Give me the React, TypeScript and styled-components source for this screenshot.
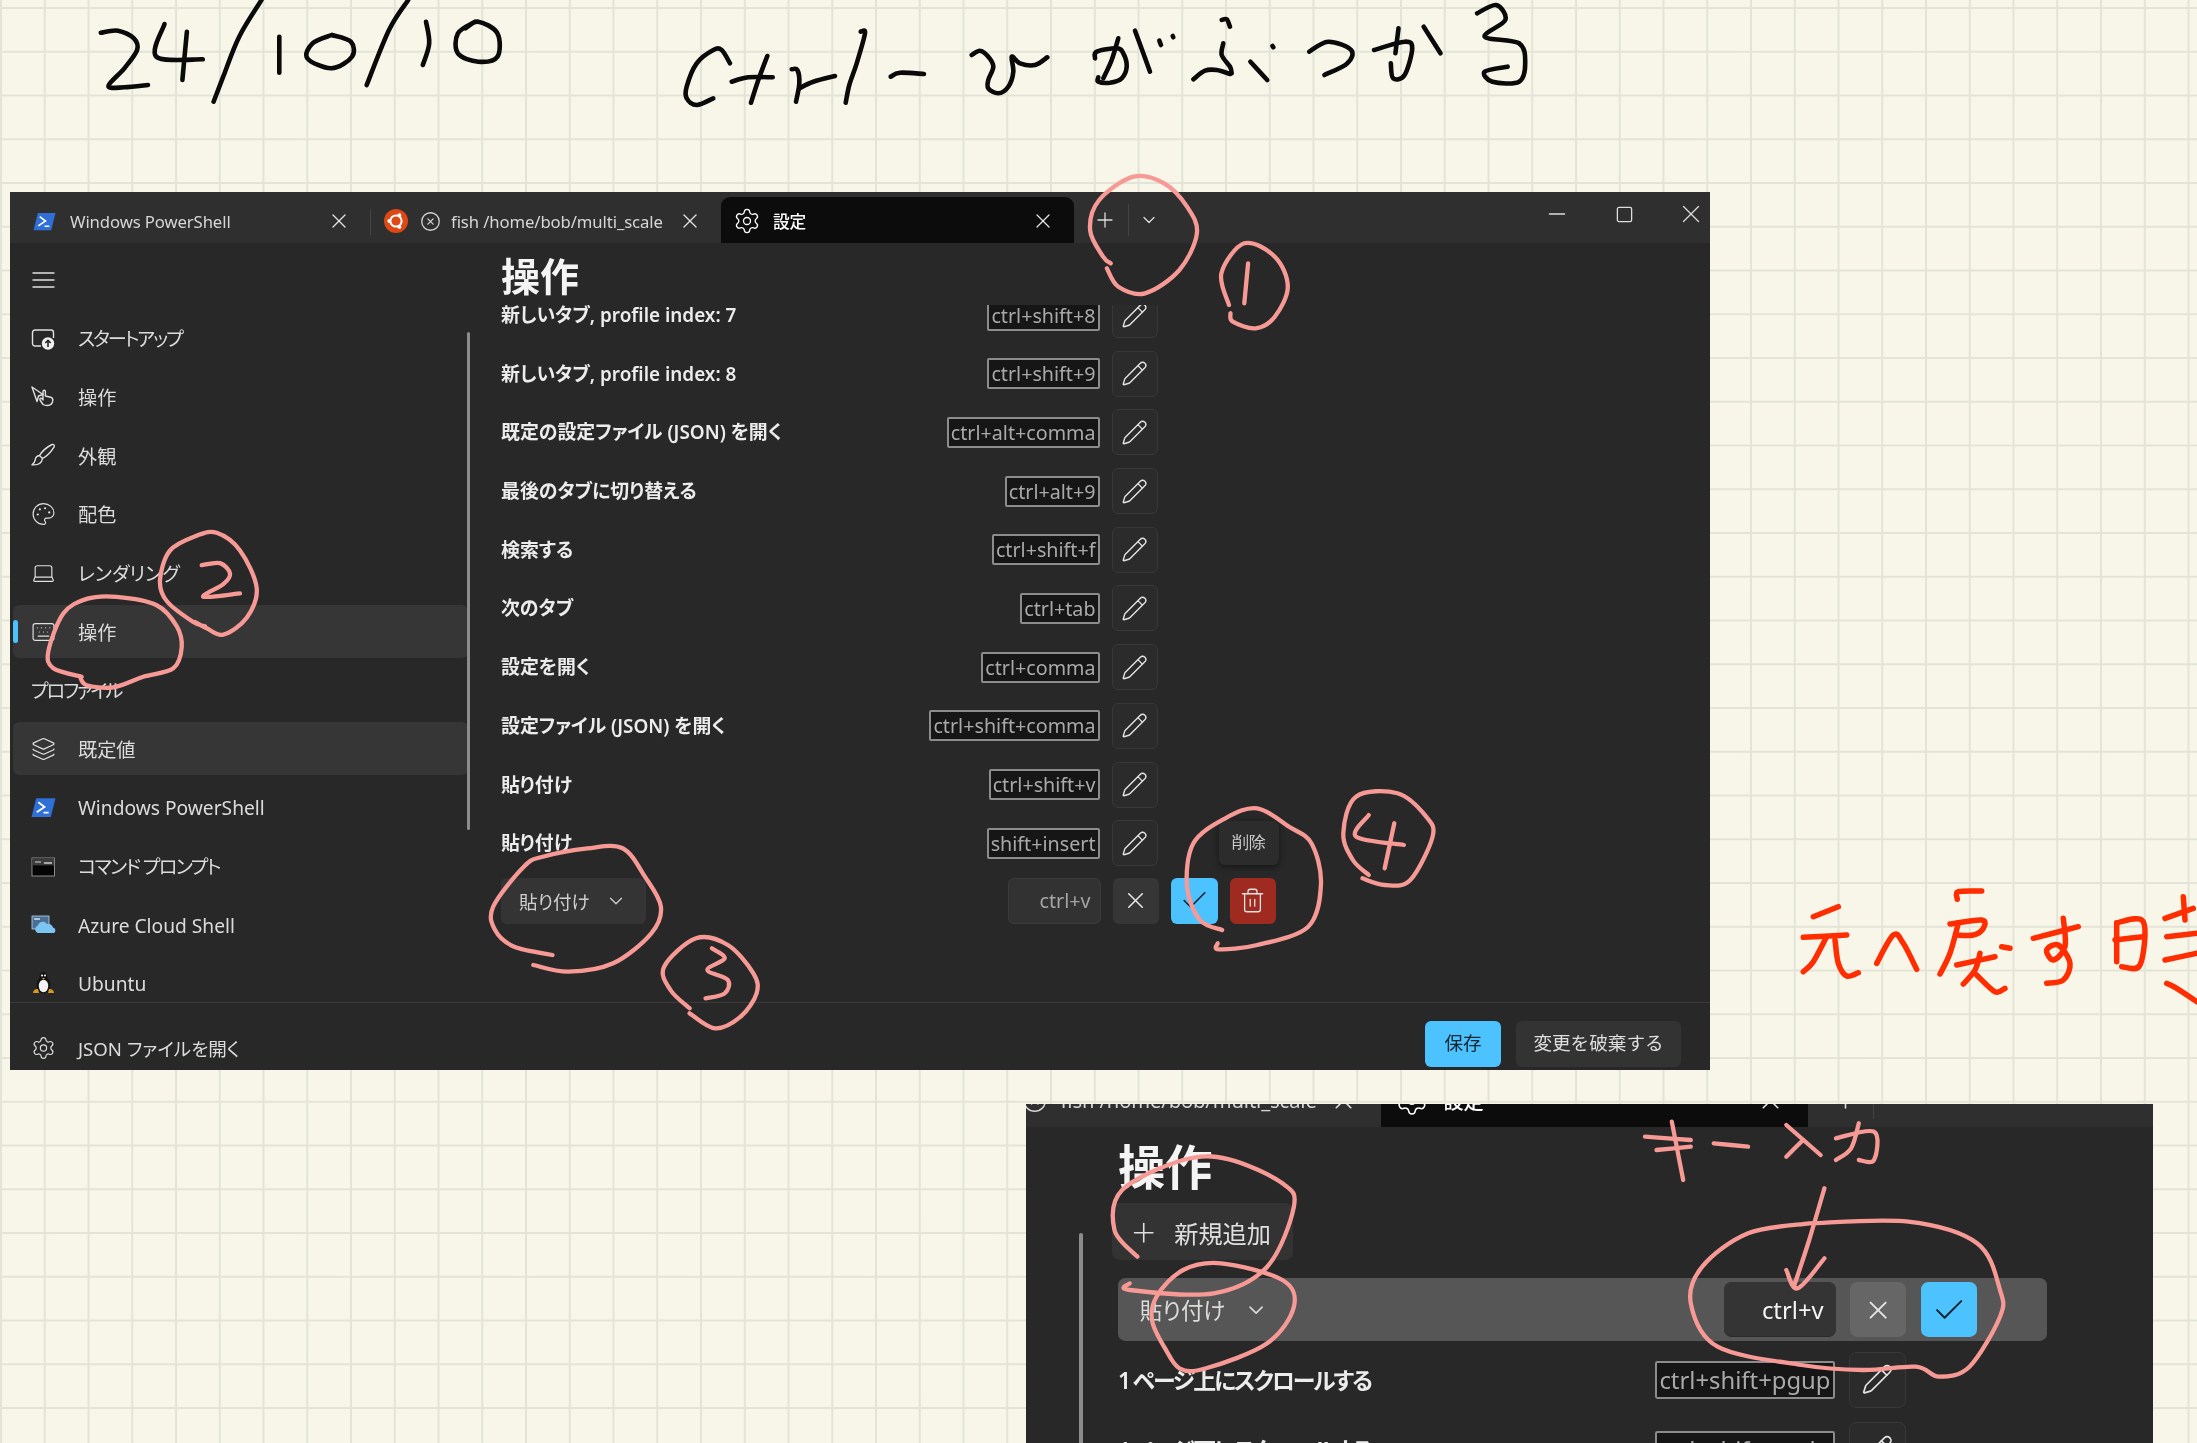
import React from "react";
import styled, { createGlobalStyle } from "styled-components";
import { Check, ChevronDown, CircleX, Keyboard, Laptop, Layers, Minus, Palette, Pencil, Plus, Settings, Square, Trash2, X } from "lucide-react";

const Global = createGlobalStyle`
  html, body { margin: 0; padding: 0; background: #f7f6e9; }
  #root { width: 2197px; height: 1443px; overflow: hidden; }
`;

const FONT = `"Noto Sans", "Noto Sans CJK JP", sans-serif`;

const Paper = styled.div`
  position: relative;
  width: 2197px;
  height: 1443px;
  overflow: hidden;
  background-color: #f7f6e9;
  background-image:
    linear-gradient(to right, #e4e5d8 0, #e2e3d6 2px, transparent 2px),
    linear-gradient(to bottom, #e4e5d8 0, #e2e3d6 2px, transparent 2px);
  background-size: 43.75px 43.75px;
  background-position: 0px 7px;
  font-family: ${FONT};
  font-feature-settings: "palt";
  color: #e6e6e6;
`;

const Win = styled.section<{ $x: number; $y: number; $w: number; $h: number }>`
  position: absolute;
  left: ${(p) => p.$x}px;
  top: ${(p) => p.$y}px;
  width: ${(p) => p.$w}px;
  height: ${(p) => p.$h}px;
  background: #282828;
  overflow: hidden;
  display: flex;
  flex-direction: column;
  filter: blur(0.45px);
`;

const Zoomed = styled.div`
  zoom: 1.21;
  width: 931.4px;
  height: 280.2px;
  display: flex;
  flex-direction: column;
  position: relative;
`;

const TabBar = styled.header`
  height: 51px;
  flex: none;
  display: flex;
  background: #2f2f2f;
`;

const TabClip = styled.div`
  height: 19px;
  flex: none;
  overflow: hidden;
  background: #2f2f2f;
`;

const ShiftedBar = styled(TabBar)`
  margin-top: -32px;
  margin-left: -57px;
`;

const Tab = styled.div<{ $w: number; $active?: boolean; $pad: number }>`
  width: ${(p) => p.$w}px;
  box-sizing: border-box;
  margin-top: 5px;
  padding: 2px 19px 0 ${(p) => p.$pad}px;
  display: flex;
  align-items: center;
  flex: none;
  font-size: 16.7px;
  border-radius: 9px 9px 0 0;
  color: ${(p) => (p.$active ? "#ffffff" : "#d6d6d6")};
  background: ${(p) => (p.$active ? "#0c0c0c" : "transparent")};
  letter-spacing: -0.1px;
  white-space: nowrap;
`;

const TabIcon = styled.span<{ $gap: number }>`
  display: inline-flex;
  margin-right: ${(p) => p.$gap}px;
  flex: none;
`;

const TabClose = styled.span`
  margin-left: auto;
  display: inline-flex;
  color: #e4e4e4;
`;

const TabTitle = styled.span`
  font-weight: 500;
`;

const TabDivider = styled.div`
  width: 1px;
  height: 26px;
  margin-top: 17px;
  background: #444;
  flex: none;
`;

const AddButtons = styled.div`
  display: flex;
  align-items: center;
  flex: none;
  margin-top: 5px;
  margin-left: 19px;
  color: #ddd;
`;

const AddDivider = styled.div`
  width: 1px;
  height: 32px;
  background: #444;
  margin: 0 10px 0 11px;
`;

const WinControls = styled.div`
  margin-left: auto;
  margin-right: -14.5px;
  display: flex;
  align-items: flex-start;
  color: #ddd;
`;

const WinControl = styled.span`
  width: 67px;
  height: 44px;
  display: flex;
  align-items: center;
  justify-content: center;
`;

const Body = styled.div`
  flex: 1;
  min-height: 0;
  display: flex;
  overflow: hidden;
`;

const Sidebar = styled.nav`
  width: 458px;
  flex: none;
  box-sizing: border-box;
  padding: 9.5px 0 0 3px;
  display: flex;
  flex-direction: column;
  gap: 5.7px;
  position: relative;
`;

const NavRow = styled.div<{ $fill?: boolean }>`
  height: 53px;
  flex: none;
  box-sizing: border-box;
  padding: 1px 0 0 18px;
  display: flex;
  align-items: center;
  gap: 22px;
  border-radius: 6px;
  position: relative;
  font-size: 19.2px;
  color: #dcdcdc;
  background: ${(p) => (p.$fill ? "#363636" : "transparent")};
`;

const Kana = styled.span<{ $tight?: number }>`
  letter-spacing: ${(p) => p.$tight ?? -2.1}px;
`;

const NavMark = styled.span`
  position: absolute;
  left: 0;
  top: 15px;
  width: 5px;
  height: 23px;
  border-radius: 3px;
  background: #4cc2ff;
`;

const NavIcon = styled.span`
  width: 25px;
  height: 25px;
  display: inline-flex;
  align-items: center;
  justify-content: center;
  flex: none;
  color: #e0e0e0;
`;

const ScrollThumb = styled.div<{ $left: number; $top: number; $h: number }>`
  position: absolute;
  left: ${(p) => p.$left}px;
  top: ${(p) => p.$top}px;
  width: 3px;
  height: ${(p) => p.$h}px;
  background: #8c8c8c;
  border-radius: 2px;
`;

const Main = styled.main`
  flex: 1;
  min-width: 0;
  display: flex;
  flex-direction: column;
  padding-left: 33px;
`;

const Heading = styled.h1`
  margin: 0;
  height: 62px;
  flex: none;
  display: flex;
  align-items: center;
  font-size: 39px;
  font-weight: 700;
  color: #f4f4f4;
`;

const List = styled.div`
  flex: 1;
  min-height: 0;
  overflow: hidden;
  display: flex;
  flex-direction: column;
`;

const ListInner = styled.div`
  margin-top: -13px;
  display: flex;
  flex-direction: column;
  gap: 12.7px;
`;

const Row = styled.div<{ $w?: number; $tuck?: boolean }>`
  width: ${(p) => p.$w ?? 657}px;
  height: 46px;
  flex: none;
  display: flex;
  align-items: center;
  gap: 12px;
  margin-top: ${(p) => (p.$tuck ? "-1px" : "0")};
`;

const Label = styled.div`
  flex: 1;
  padding-bottom: 2px;
  font-size: 18.9px;
  font-weight: 600;
  color: #ececec;
  white-space: nowrap;
`;

const KeyBox = styled.kbd`
  height: 31px;
  box-sizing: border-box;
  border: 2px solid #8c8c8c;
  border-radius: 2px;
  background: #161616;
  padding: 0 2px;
  display: flex;
  align-items: center;
  font-family: ${FONT};
  font-size: 19.7px;
  color: #a9a9a9;
  white-space: nowrap;
`;

const IconButton = styled.button<{ $kind?: "edit" | "plain" | "accept" | "danger" | "muted" }>`
  width: 46.5px;
  height: 46px;
  padding: 0;
  flex: none;
  position: relative;
  display: inline-flex;
  align-items: center;
  justify-content: center;
  border-radius: 6px;
  box-sizing: border-box;
  border: ${(p) => (p.$kind === "edit" ? "1.5px solid #383838" : "none")};
  background: ${(p) =>
    p.$kind === "accept" ? "#4cc2ff" : p.$kind === "danger" ? "#9f2a20" : p.$kind === "muted" ? "#666666" : p.$kind === "edit" ? "#2b2b2b" : "#363636"};
  color: ${(p) => (p.$kind === "accept" ? "#10222c" : "#e4e4e4")};
`;

const Dropdown = styled.div<{ $bare?: boolean }>`
  height: 46px;
  display: flex;
  align-items: center;
  gap: 15px;
  padding: 0 19px 0 18px;
  border-radius: 6px;
  background: ${(p) => (p.$bare ? "transparent" : "#343434")};
  color: ${(p) => (p.$bare ? "#dcdcdc" : "#cfcfcf")};
  font-size: 18.6px;
  flex: none;
`;

const Spacer = styled.div`
  flex: 1;
`;

const KeyInput = styled.div<{ $dark?: boolean; $w: number }>`
  width: ${(p) => p.$w}px;
  height: 46px;
  box-sizing: border-box;
  border: 1.5px solid ${(p) => (p.$dark ? "#343434" : "#3b3b3b")};
  border-bottom-color: ${(p) => (p.$dark ? "#2a2a2a" : "#3b3b3b")};
  border-radius: 6px;
  background: ${(p) => (p.$dark ? "#343434" : "#323232")};
  color: ${(p) => (p.$dark ? "#f4f4f4" : "#a4a4a4")};
  display: flex;
  align-items: center;
  justify-content: flex-end;
  padding-right: 9px;
  font-size: 19.7px;
  flex: none;
`;

const Tooltip = styled.div`
  position: absolute;
  left: -11px;
  bottom: 59px;
  width: 60px;
  height: 44px;
  display: flex;
  align-items: center;
  justify-content: center;
  border-radius: 6px;
  background: #2c2c2c;
  box-shadow: 0 2px 6px rgba(0, 0, 0, 0.45);
  font-size: 16.7px;
  color: #cfcfcf;
`;

const Footer = styled.footer`
  height: 68px;
  flex: none;
  box-sizing: border-box;
  border-top: 1.5px solid #3a3a3a;
  display: flex;
  align-items: center;
  padding: 0 29px 0 21px;
  font-size: 18.6px;
  color: #dcdcdc;
`;

const FooterLink = styled.div`
  display: flex;
  align-items: center;
  gap: 22px;
  margin-top: 22px;
`;

const FooterActions = styled.div`
  margin-left: auto;
  display: flex;
  gap: 15px;
  margin-top: 14px;
`;

const TextButton = styled.button<{ $accent?: boolean; $w: number }>`
  width: ${(p) => p.$w}px;
  height: 46px;
  padding: 0 0 4px;
  border: none;
  border-radius: 6px;
  font-family: ${FONT};
  font-size: 18.6px;
  background: ${(p) => (p.$accent ? "#4cc2ff" : "#333333")};
  color: ${(p) => (p.$accent ? "#0f2530" : "#dedede")};
`;

const SecondBody = styled.div`
  flex: 1;
  min-height: 0;
  padding-left: 76px;
  display: flex;
  flex-direction: column;
`;

const NewButton = styled.div`
  width: 150px;
  height: 47px;
  flex: none;
  margin: 1px 0 0 -5px;
  border-radius: 6px;
  background: #333333;
  display: flex;
  align-items: center;
  gap: 12px;
  padding: 1px 0 0 13.5px;
  box-sizing: border-box;
  font-size: 20px;
  color: #e0e0e0;
`;

const HighlightRow = styled.div`
  width: 768px;
  height: 52px;
  flex: none;
  margin-top: 15px;
  box-sizing: border-box;
  padding-right: 58px;
  background: #565656;
  border-radius: 6px;
  display: flex;
  align-items: center;
  gap: 12px;
`;

const SecondRows = styled.div`
  margin-top: 9px;
  display: flex;
  flex-direction: column;
  gap: 12px;
`;

const InkLayer = styled.svg`
  position: absolute;
  left: 0;
  top: 0;
  width: 2197px;
  height: 1443px;
  pointer-events: none;
  fill: none;
  stroke-linecap: round;
  stroke-linejoin: round;
`;

const ic = { strokeWidth: 1.3, absoluteStrokeWidth: true } as const;
const bold = { strokeWidth: 1.6, absoluteStrokeWidth: true } as const;

const PsIcon = ({ size = 23 }: { size?: number }) => (
  <svg width={size} height={size} viewBox="0 0 24 24">
    <path d="M5 3h18.500l-4.500 18H.5z" fill="#2f6fd6" />
    <path d="M7 7l6 4.500-7.500 5M12 17h5" fill="none" stroke="#fff" strokeWidth="1.7" />
  </svg>
);

const UbuntuIcon = () => (
  <svg width="24" height="24" viewBox="0 0 24 24">
    <circle cx="12" cy="12" r="12" fill="#dd4814" />
    <circle cx="12" cy="12" r="5.600" fill="none" stroke="#fff" strokeWidth="2" />
    <circle cx="5.200" cy="12" r="1.900" fill="#fff" />
    <circle cx="15.400" cy="6.100" r="1.900" fill="#fff" />
    <circle cx="15.400" cy="17.900" r="1.900" fill="#fff" />
  </svg>
);

const MenuIcon = () => (
  <svg width="23" height="16" viewBox="0 0 23 16" fill="none" stroke="currentColor" strokeWidth="1.4">
    <path d="M.5 1h22M.5 8h22M.5 15h22" />
  </svg>
);

const StartupIcon = () => (
  <svg width="25" height="25" viewBox="0 0 25 25" fill="none">
    <path d="M10 20H4a2.500 2.500 0 0 1-2.500-2.500v-11A2.500 2.500 0 0 1 4 4h16a2.500 2.500 0 0 1 2.500 2.500V12" stroke="currentColor" strokeWidth="1.400" />
    <circle cx="17" cy="17.500" r="6.200" fill="#f0f0f0" />
    <path d="M17 21v-6.500M14.300 17l2.700-2.700 2.700 2.700" stroke="#282828" strokeWidth="1.600" />
  </svg>
);

const ActionsIcon = () => (
  <svg width="25" height="25" viewBox="0 0 25 25" fill="none" stroke="currentColor" strokeWidth="1.400" strokeLinejoin="round" strokeLinecap="round">
    <path d="M1 3l11 7.500-4.500 1.500L6 17.500z" />
    <path d="M12 20.500l-3-4.500c-.8-1.300 1-2.600 2-1.300l1 1.200V7.500c0-1.600 2.400-1.600 2.400 0V12l5.200 1.200c1.600.4 2.400 1.600 2.200 3.200-.3 3-2.200 5-5.300 5.100-1.700 0-3.400-.2-4.500-1z" />
  </svg>
);

const BrushIcon = () => (
  <svg width="25" height="25" viewBox="0 0 25 25" fill="none" stroke="currentColor" strokeWidth="1.400" strokeLinejoin="round" strokeLinecap="round">
    <path d="M21 1.500c1.800-.6 2.800 1 2.100 2.300C20 9 15.500 13.300 11.500 15.500l-3-3C11 8.500 16 4 21 1.500z" />
    <path d="M8.500 12.500c-2.500.3-4 2-4.300 4.300-.2 1.700-1.200 3.500-3.200 5 4 .4 9.500-.4 10.500-6.300" />
  </svg>
);

const CmdIcon = () => (
  <svg width="25" height="25" viewBox="0 0 25 25">
    <rect x="1" y="4" width="22.500" height="18" fill="#050505" stroke="#a8a8a8" strokeWidth="0.800" />
    <rect x="1.400" y="4.400" width="21.700" height="7" fill="#3c3c3c" />
    <path d="M4 8h6" stroke="#9c9c9c" strokeWidth="1.600" />
    <path d="M13 9h8" stroke="#f0f0f0" strokeWidth="1.200" />
  </svg>
);

const AzureIcon = () => (
  <svg width="25" height="25" viewBox="0 0 25 25">
    <rect x="1" y="3" width="17" height="13" fill="#4a6f95" stroke="#b9d4ea" strokeWidth="0.800" />
    <path d="M3 6h6" stroke="#fff" strokeWidth="1.200" />
    <path d="M7 20a4 4 0 0 1 0-7.600a5 5 0 0 1 9-1.400a5 5 0 0 1 6 3.500a3 3 0 0 1 1 5.500z" fill="#7cc4f2" />
  </svg>
);

const TuxIcon = () => (
  <svg width="25" height="25" viewBox="0 0 25 25">
    <ellipse cx="12.500" cy="14" rx="7" ry="8.500" fill="#141414" />
    <ellipse cx="12.500" cy="6" rx="4" ry="5" fill="#141414" />
    <ellipse cx="12.500" cy="15" rx="4.700" ry="6.200" fill="#f2f2f2" />
    <circle cx="11" cy="4.500" r="1" fill="#fff" />
    <circle cx="14" cy="4.500" r="1" fill="#fff" />
    <path d="M11 7h3l-1.500 1.600z" fill="#e5a823" />
    <path d="M2 22c0-3 3-4.500 5-4l1 4zM23 22c0-3-3-4.500-5-4l-1 4z" fill="#d79a1c" />
  </svg>
);

type Pt = number[];
type Xf = { ox: number; oy: number; sx: number; sy: number };

const smooth = (flat: Pt, t: Xf) => {
  const p: [number, number][] = [];
  for (let i = 0; i < flat.length; i += 2) p.push([t.ox + flat[i] / t.sx, t.oy + flat[i + 1] / t.sy]);
  let d = `M${p[0][0].toFixed(1)} ${p[0][1].toFixed(1)}`;
  for (let i = 0; i < p.length - 1; i++) {
    const a = p[Math.max(i - 1, 0)], b = p[i], c = p[i + 1], e = p[Math.min(i + 2, p.length - 1)];
    const c1x = b[0] + (c[0] - a[0]) / 6, c1y = b[1] + (c[1] - a[1]) / 6;
    const c2x = c[0] - (e[0] - b[0]) / 6, c2y = c[1] - (e[1] - b[1]) / 6;
    d += `C${c1x.toFixed(1)} ${c1y.toFixed(1)} ${c2x.toFixed(1)} ${c2y.toFixed(1)} ${c[0].toFixed(1)} ${c[1].toFixed(1)}`;
  }
  return d;
};

const Z1: Xf = { ox: 0, oy: 0, sx: 1.568, sy: 3 };
const Z2: Xf = { ox: 0, oy: 420, sx: 3, sy: 2.376 };
const Z3: Xf = { ox: 460, oy: 700, sx: 1.568, sy: 3 };
const Z4: Xf = { ox: 1000, oy: 1090, sx: 1.31, sy: 3 };
const Z5: Xf = { ox: 1000, oy: 0, sx: 1.31, sy: 3 };
const Z6: Xf = { ox: 1700, oy: 820, sx: 3, sy: 3 };
const Z7: Xf = { ox: 960, oy: 0, sx: 3, sy: 3 };
const Z8: Xf = { ox: 680, oy: 20, sx: 3, sy: 3 };

const black: [Pt, Xf][] = [
  [[158, 98, 185, 92, 210, 115, 215, 150, 195, 205, 170, 258, 195, 262, 232, 255], Z1],
  [[258, 72, 245, 170, 318, 178], Z1],
  [[293, 95, 286, 240], Z1],
  [[410, 0, 375, 110, 350, 230, 335, 305], Z1],
  [[438, 110, 438, 218], Z1],
  [[520, 105, 490, 130, 482, 175, 520, 205, 552, 170, 550, 125, 520, 105], Z1],
  [[640, 0, 610, 90, 575, 255], Z1],
  [[668, 65, 673, 130, 663, 195], Z1],
  [[745, 65, 718, 100, 718, 160, 750, 185, 780, 170, 780, 100, 750, 65, 730, 85], Z1],
  [[150, 130, 125, 90, 100, 90, 50, 130, 20, 200, 20, 235, 50, 255, 100, 235], Z8],
  [[155, 185, 205, 172, 278, 172], Z8],
  [[262, 108, 235, 180, 213, 248], Z8],
  [[335, 148, 352, 150, 358, 190, 348, 245], Z8],
  [[358, 205, 400, 185, 465, 168], Z8],
  [[542, 35, 555, 40, 530, 130, 508, 195, 497, 248], Z8],
  [[632, 170, 660, 158, 732, 162], Z8],
  [[35, 165, 60, 152, 85, 170, 100, 200, 85, 240, 85, 265, 115, 280, 145, 260, 160, 215, 155, 170, 180, 190, 225, 195, 262, 172], Z7],
  [[405, 175, 410, 155, 470, 145, 490, 160, 500, 200, 485, 235, 450, 248, 415, 245, 415, 232], Z7],
  [[475, 115, 455, 180, 430, 235], Z7],
  [[525, 92, 550, 160, 570, 215], Z7],
  [[598, 122, 603, 135], Z7],
  [[638, 108, 640, 112], Z7],
  [[785, 60, 800, 58, 810, 80], Z7],
  [[790, 130, 785, 165, 810, 200, 815, 220], Z7],
  [[700, 238, 735, 212, 770, 210, 810, 222], Z7],
  [[328, 185, 350, 240], Z5],
  [[357, 138, 358, 142], Z5],
  [[405, 155, 430, 125, 460, 150, 455, 190, 425, 225], Z5],
  [[490, 150, 530, 125, 540, 145, 530, 225, 515, 235, 512, 190], Z5],
  [[522, 85, 518, 160], Z5],
  [[555, 80, 577, 160], Z5],
  [[625, 40, 650, 15, 662, 60, 635, 110, 680, 130, 688, 190, 680, 245, 645, 245, 635, 215, 665, 200], Z5],
];
const pink: [Pt, Xf][] = [
  [[145, 790, 135, 770, 118, 690, 130, 600, 175, 530, 215, 550, 245, 620, 258, 700, 235, 810, 190, 880, 155, 860, 140, 805], Z5],
  [[300, 915, 290, 820, 320, 730, 360, 770, 377, 860, 360, 950, 335, 985, 305, 965, 302, 940], Z5],
  [[325, 790, 320, 910], Z5],
  [[615, 490, 580, 480, 500, 430, 480, 380, 510, 310, 590, 275, 650, 268, 720, 310, 770, 400, 740, 470, 670, 510, 620, 495, 585, 480], Z2],
  [[605, 345, 660, 340, 690, 365, 670, 390, 610, 420, 720, 412], Z2],
  [[245, 610, 160, 590, 145, 550, 190, 460, 260, 425, 350, 420, 470, 440, 530, 490, 545, 540, 520, 590, 430, 610, 340, 635, 260, 630, 240, 610], Z2],
  [[145, 765, 85, 740, 55, 690, 52, 620, 100, 500, 130, 470, 200, 445, 255, 445, 290, 530, 315, 620, 300, 700, 240, 790, 170, 815, 115, 795], Z3],
  [[360, 925, 330, 870, 320, 800, 370, 715, 420, 735, 460, 820, 465, 880, 440, 950, 400, 985, 360, 940], Z3],
  [[395, 745, 415, 775, 388, 810, 420, 840, 415, 880, 385, 895], Z3],
  [[1195, 690, 1160, 660, 1140, 560, 1150, 430, 1200, 355, 1250, 325, 1300, 380, 1335, 430, 1350, 550, 1330, 680, 1250, 735, 1190, 748, 1188, 730], Z3],
  [[1425, 525, 1400, 480, 1385, 400, 1405, 290, 1470, 280, 1515, 350, 1525, 410, 1490, 540, 1450, 555, 1415, 535], Z3],
  [[1425, 345, 1405, 410, 1480, 435], Z3],
  [[1465, 370, 1450, 505], Z3],
  [[180, 500, 150, 420, 160, 300, 240, 210, 300, 208, 370, 280, 385, 350, 350, 530, 280, 610, 170, 600, 170, 580], Z4],
  [[225, 810, 200, 700, 205, 620, 240, 540, 290, 520, 370, 570, 385, 650, 350, 760, 270, 835, 235, 835, 215, 770], Z4],
  [[1060, 400, 980, 430, 920, 530, 905, 640, 940, 770, 1050, 825, 1130, 840, 1200, 830, 1230, 860, 1270, 830, 1310, 680, 1310, 600, 1280, 460, 1190, 395, 1060, 400], Z4],
  [[1080, 295, 1060, 450, 1040, 590], Z4],
  [[1030, 540, 1045, 595, 1080, 505], Z4],
  [[845, 140, 905, 150], Z4],
  [[860, 180, 905, 170], Z4],
  [[880, 95, 895, 270], Z4],
  [[935, 160, 980, 170], Z4],
  [[1030, 105, 1075, 195], Z4],
  [[1052, 150, 1030, 200], Z4],
  [[1095, 145, 1145, 125, 1145, 210, 1125, 210], Z4],
  [[1125, 100, 1115, 175, 1095, 210], Z4],
];
const red: Pt[] = [
  [340, 290, 415, 260],
  [310, 352, 440, 345],
  [380, 350, 340, 425, 310, 455],
  [405, 360, 415, 430, 440, 468, 475, 458],
  [530, 430, 580, 345, 610, 370, 650, 448],
  [772, 238, 775, 215, 845, 213],
  [750, 312, 845, 300, 850, 325, 820, 345, 770, 345],
  [775, 310, 750, 400, 720, 462],
  [770, 435, 885, 410],
  [840, 400, 825, 450, 790, 492],
  [830, 465, 885, 515, 915, 505],
  [905, 380, 930, 385],
  [1000, 355, 1135, 320],
  [1090, 295, 1095, 380, 1060, 420, 1040, 390, 1075, 375, 1110, 430, 1090, 480, 1040, 490],
  [1250, 310, 1250, 425],
  [1250, 308, 1330, 305, 1320, 435, 1265, 440],
  [1245, 360, 1330, 350],
  [1450, 230, 1455, 300],
  [1395, 295, 1480, 265],
  [1400, 350, 1491, 340],
  [1395, 420, 1491, 400],
  [1400, 490, 1430, 505, 1491, 545],
];

const Ink = () => (
  <InkLayer viewBox="0 0 2197 1443">
    <g stroke="#0a0a0a" strokeWidth="4.600">
      {black.map(([s, t], i) => <path key={i} d={smooth(s, t)} />)}
    </g>
    <g stroke="#f79a96" strokeWidth="4.300">
      {pink.map(([s, t], i) => <path key={i} d={smooth(s, t)} />)}
    </g>
    <g stroke="#ff2d00" strokeWidth="5.500">
      {red.map((s, i) => <path key={i} d={smooth(s, Z6)} />)}
    </g>
  </InkLayer>
);

const rows: [string, string][] = [
  ["新しいタブ, profile index: 7", "ctrl+shift+8"],
  ["新しいタブ, profile index: 8", "ctrl+shift+9"],
  ["既定の設定ファイル (JSON) を開く", "ctrl+alt+comma"],
  ["最後のタブに切り替える", "ctrl+alt+9"],
  ["検索する", "ctrl+shift+f"],
  ["次のタブ", "ctrl+tab"],
  ["設定を開く", "ctrl+comma"],
  ["設定ファイル (JSON) を開く", "ctrl+shift+comma"],
  ["貼り付け", "ctrl+shift+v"],
  ["貼り付け", "shift+insert"],
];

const navTop: [React.ReactNode, React.ReactNode][] = [
  [<StartupIcon />, <Kana>スタートアップ</Kana>],
  [<ActionsIcon />, "操作"],
  [<BrushIcon />, "外観"],
  [<Palette size={28} {...ic} />, "配色"],
  [<Laptop size={28} {...ic} />, "レンダリング"],
];

const navProfiles: [React.ReactNode, React.ReactNode, boolean?][] = [
  [<Layers size={26} {...ic} />, "既定値", true],
  [<PsIcon size={25} />, "Windows PowerShell"],
  [<CmdIcon />, <Kana $tight={-1.6}>コマンド プロンプト</Kana>],
  [<AzureIcon />, "Azure Cloud Shell"],
  [<TuxIcon />, "Ubuntu"],
];

const FishTab = ({ pad }: { pad: number }) => (
  <Tab $w={350} $pad={pad}>
    {pad < 40 && <TabIcon $gap={12}><UbuntuIcon /></TabIcon>}
    <TabIcon $gap={10.5}><CircleX size={21} {...ic} /></TabIcon>
    fish /home/bob/multi_scale
    <TabClose><X size={24} {...ic} /></TabClose>
  </Tab>
);

const SettingsTab = () => (
  <Tab $w={353} $pad={12} $active>
    <TabIcon $gap={12}><Settings size={28} {...ic} /></TabIcon>
    <TabTitle>設定</TabTitle>
    <TabClose><X size={24} {...ic} /></TabClose>
  </Tab>
);

const Adders = () => (
  <AddButtons>
    <Plus size={24} {...ic} />
    <AddDivider />
    <ChevronDown size={20} {...ic} />
  </AddButtons>
);

const Pen = () => <Pencil size={27} strokeWidth={1.4} absoluteStrokeWidth />;

export default function App() {
  return (
    <Paper>
      <Global />
      <Win $x={10} $y={192} $w={1700} $h={878}>
        <TabBar>
          <Tab $w={360} $pad={23}>
            <TabIcon $gap={14}><PsIcon /></TabIcon>
            Windows PowerShell
            <TabClose><X size={24} {...ic} /></TabClose>
          </Tab>
          <TabDivider />
          <FishTab pad={12.5} />
          <SettingsTab />
          <Adders />
          <WinControls>
            <WinControl><Minus size={26} {...ic} /></WinControl>
            <WinControl><Square size={19} {...ic} /></WinControl>
            <WinControl><X size={30} {...ic} /></WinControl>
          </WinControls>
        </TabBar>
        <Body>
          <Sidebar>
            <NavRow><NavIcon><MenuIcon /></NavIcon></NavRow>
            {navTop.map(([icon, text], i) => (
              <NavRow key={i}><NavIcon>{icon}</NavIcon>{text}</NavRow>
            ))}
            <NavRow $fill>
              <NavMark />
              <NavIcon><Keyboard size={28} {...ic} /></NavIcon>
              操作
            </NavRow>
            <NavRow><Kana>プロファイル</Kana></NavRow>
            {navProfiles.map(([icon, text, fill], i) => (
              <NavRow key={i} $fill={fill}><NavIcon>{icon}</NavIcon>{text}</NavRow>
            ))}
            <ScrollThumb $left={457} $top={89} $h={498} />
          </Sidebar>
          <Main>
            <Heading>操作</Heading>
            <List>
              <ListInner>
                {rows.map(([label, key], i) => (
                  <Row key={i}>
                    <Label>{label}</Label>
                    <KeyBox>{key}</KeyBox>
                    <IconButton $kind="edit"><Pen /></IconButton>
                  </Row>
                ))}
                <Row $w={775} $tuck>
                  <Dropdown>貼り付け<ChevronDown size={22} {...ic} /></Dropdown>
                  <Spacer />
                  <KeyInput $w={93}>ctrl+v</KeyInput>
                  <IconButton><X size={27} {...bold} /></IconButton>
                  <IconButton $kind="accept"><Check size={31} {...bold} /></IconButton>
                  <IconButton $kind="danger">
                    <Trash2 size={27} {...ic} />
                    <Tooltip>削除</Tooltip>
                  </IconButton>
                </Row>
              </ListInner>
            </List>
          </Main>
        </Body>
        <Footer>
          <FooterLink>
            <NavIcon><Settings size={28} {...ic} /></NavIcon>
            JSON ファイルを開く
          </FooterLink>
          <FooterActions>
            <TextButton $accent $w={76}>保存</TextButton>
            <TextButton $w={165}>変更を破棄する</TextButton>
          </FooterActions>
        </Footer>
      </Win>

      <Win $x={1026} $y={1104} $w={1127} $h={339}>
        <Zoomed>
          <TabClip>
            <ShiftedBar>
              <FishTab pad={54} />
              <SettingsTab />
              <Adders />
            </ShiftedBar>
          </TabClip>
          <SecondBody>
            <Heading>操作</Heading>
            <NewButton><Plus size={26} {...ic} />新規追加</NewButton>
            <HighlightRow>
              <Dropdown $bare>貼り付け<ChevronDown size={20} {...ic} /></Dropdown>
              <Spacer />
              <KeyInput $dark $w={92}>ctrl+v</KeyInput>
              <IconButton $kind="muted"><X size={25} {...bold} /></IconButton>
              <IconButton $kind="accept"><Check size={30} {...bold} /></IconButton>
            </HighlightRow>
            <SecondRows>
              <Row $w={651}>
                <Label><Kana $tight={-1.7}>1 ページ上にスクロールする</Kana></Label>
                <KeyBox>ctrl+shift+pgup</KeyBox>
                <IconButton $kind="edit"><Pen /></IconButton>
              </Row>
              <Row $w={651}>
                <Label><Kana $tight={-1.7}>1 ページ下にスクロールする</Kana></Label>
                <KeyBox>ctrl+shift+pgdn</KeyBox>
                <IconButton $kind="edit"><Pen /></IconButton>
              </Row>
            </SecondRows>
          </SecondBody>
          <ScrollThumb $left={43.8} $top={107} $h={200} />
        </Zoomed>
      </Win>

      <Ink />
    </Paper>
  );
}
